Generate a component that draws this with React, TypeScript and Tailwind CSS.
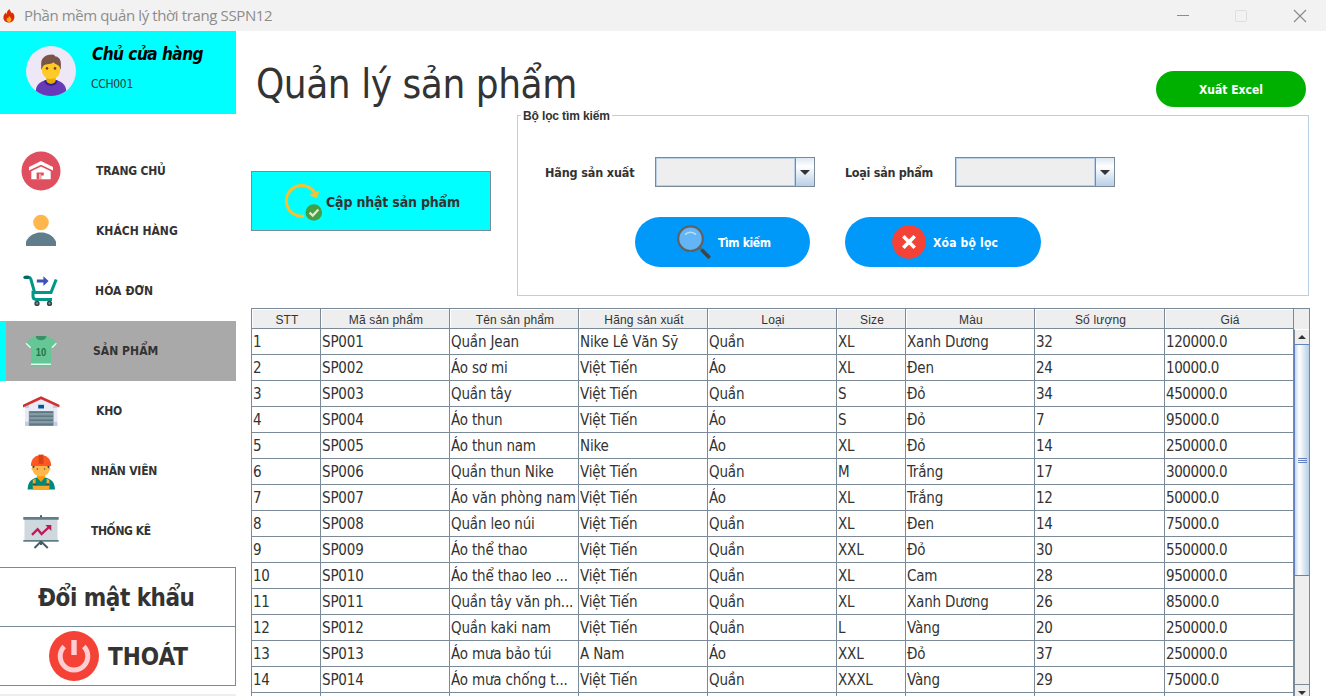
import React from "react";

type Product = [string, string, string, string, string, string, string, string, string];

const HEADERS = ["STT", "Mã sản phẩm", "Tên sản phẩm", "Hãng sản xuất", "Loại", "Size", "Màu", "Số lượng", "Giá"];

const PRODUCTS: Product[] = [
  ["1", "SP001", "Quần Jean", "Nike Lê Văn Sỹ", "Quần", "XL", "Xanh Dương", "32", "120000.0"],
  ["2", "SP002", "Áo sơ mi", "Việt Tiến", "Áo", "XL", "Đen", "24", "10000.0"],
  ["3", "SP003", "Quần tây", "Việt Tiến", "Quần", "S", "Đỏ", "34", "450000.0"],
  ["4", "SP004", "Áo thun", "Việt Tiến", "Áo", "S", "Đỏ", "7", "95000.0"],
  ["5", "SP005", "Áo thun nam", "Nike", "Áo", "XL", "Đỏ", "14", "250000.0"],
  ["6", "SP006", "Quần thun Nike", "Việt Tiến", "Quần", "M", "Trắng", "17", "300000.0"],
  ["7", "SP007", "Áo văn phòng nam", "Việt Tiến", "Áo", "XL", "Trắng", "12", "50000.0"],
  ["8", "SP008", "Quần leo núi", "Việt Tiến", "Quần", "XL", "Đen", "14", "75000.0"],
  ["9", "SP009", "Áo thể thao", "Việt Tiến", "Quần", "XXL", "Đỏ", "30", "550000.0"],
  ["10", "SP010", "Áo thể thao leo ...", "Việt Tiến", "Quần", "XL", "Cam", "28", "950000.0"],
  ["11", "SP011", "Quần tây văn ph...", "Việt Tiến", "Quần", "XL", "Xanh Dương", "26", "85000.0"],
  ["12", "SP012", "Quần kaki nam", "Việt Tiến", "Quần", "L", "Vàng", "20", "250000.0"],
  ["13", "SP013", "Áo mưa bảo túi", "A Nam", "Áo", "XXL", "Đỏ", "37", "250000.0"],
  ["14", "SP014", "Áo mưa chống t...", "Việt Tiến", "Quần", "XXXL", "Vàng", "29", "75000.0"],
  ["", "", "", "", "", "", "", "", ""],
];

const GRID = "grid grid-cols-[69px_129px_129px_129px_129px_69px_129px_130px_129px]";

function Flame() {
  return (
    <svg width="12" height="14" viewBox="0 0 12 14">
      <path d="M6.2 0C7 2 8.6 3 8.8 4.6L9.6 3.4C11 5 11.6 6.6 11.4 8.6C11 12 8.6 13.6 6 13.6C3 13.6 .4 11.8 .4 8.6C.4 6.4 1.6 5 2.6 3.6C2.8 4.4 3 4.8 3.6 5.2C3.6 3 4.8 1.6 6.2 0Z" fill="#dd2c00" />
      <path d="M6.4 7C7 8.4 8.4 8.8 8.4 10.6C8.4 12 7.4 13 6 13C4.6 13 3.6 12 3.6 10.8C3.6 10 3.9 9.4 4.4 8.8L5.2 9.4C5.2 8.4 5.8 7.6 6.4 7Z" fill="#ffab1a" />
    </svg>
  );
}

function Avatar() {
  return (
    <svg width="50" height="50" viewBox="0 0 50 50">
      <circle cx="25" cy="25" r="25" fill="#ede7f6" />
      <path d="M10 43C11 37 17 34.5 21 34H29C33 34.5 39 37 40 43V45A25 25 0 0 1 10 45Z" fill="#673ab7" />
      <path d="M18.5 34.6C19 41.500 31 41.500 31.5 34.6L29.5 34H20.5Z" fill="#311b92" />
      <path d="M20.3 29H29.7V34.6C29 39 21 39 20.3 34.6Z" fill="#e6ac00" />
      <path d="M16 16H34V24.5C34 30 29.5 33 25 33S16 30 16 24.5Z" fill="#ffca28" />
      <path d="M15.2 24V17C15.4 11.5 20 8.8 26 8.6C28 8.6 28.6 9.6 29 10.2C32.6 10.8 34.9 13 34.9 18V24L33.4 20.5C32.5 18.5 30 19 27.5 16.2C24 19.4 18 17 16.7 21Z" fill="#795548" />
      <circle cx="21" cy="22.4" r="1.3" fill="#784719" />
      <circle cx="29" cy="22.4" r="1.3" fill="#784719" />
    </svg>
  );
}

function HomeIcon() {
  return (
    <svg width="40" height="40" viewBox="0 0 40 40">
      <circle cx="20" cy="20" r="19.5" fill="#e04f5f" />
      <path d="M20 10L32 16V19.6L20 13.8L8 19.6V16Z" fill="#fff" />
      <path d="M10.3 20.2L20 15.4L29.7 20.2V28.3H10.3Z" fill="#fff" />
      <path d="M15.6 21.400H22.800V24.600H20.300V28.3H19.500V22.800H18.400V28.300H15.600Z" fill="#e04f5f" />
    </svg>
  );
}

function CustomerIcon() {
  return (
    <svg width="40" height="40" viewBox="0 1 40 40">
      <circle cx="20" cy="12.5" r="7.8" fill="#ffb74d" />
      <path d="M5 36V31.5C8.5 25 14 22.5 20 22.5S31.5 25 35 31.5V36Z" fill="#607d8b" />
    </svg>
  );
}

function CartIcon() {
  return (
    <svg width="40" height="40" viewBox="0 1.200 40 40" fill="none">
      <path d="M4.5 7.5H7.5C9 7.5 9.4 8 9.8 9.2L13.600 22.6H30L35.2 9.700" stroke="#009688" strokeWidth="3" />
      <path d="M4 7.5H7" stroke="#00695c" strokeWidth="3.2" strokeLinecap="round" />
      <path d="M12 21V26.5C12 29 13 29.6 15 29.6H31" stroke="#009688" strokeWidth="3" />
      <path d="M15.8 9.800H22.4V6.400L27.6 11.300L22.4 16.200V12.800H15.8Z" fill="#3f51b5" />
      <circle cx="16" cy="33.600" r="1.9" stroke="#37474f" strokeWidth="1.5" fill="#78909c" />
      <circle cx="28.5" cy="33.600" r="1.9" stroke="#37474f" strokeWidth="1.5" fill="#78909c" />
    </svg>
  );
}

function ShirtIcon() {
  return (
    <svg width="40" height="40" viewBox="0 0 40 40">
      <path d="M14.5 5H25.5L32 8L36.4 13.5L32 17.2L30 15.5V35.6H10V15.5L8 17.2L4 13.5L8.5 8Z" fill="#66c796" />
      <path d="M14.8 5H25.4C25 8 23 9.2 20 9.2S15 8 14.8 5Z" fill="#3f8f66" />
      <path d="M5 12.2L9.5 16.6M35.4 12.2L31 16.6M10 33.2H30" stroke="#e0f7e9" strokeWidth="1.5" />
      <text x="20" y="24.6" textAnchor="middle" fontSize="10.5" fontWeight="700" textLength="10.5" lengthAdjust="spacingAndGlyphs" fill="#24734b" className="font-['Liberation_Sans',sans-serif]">10</text>
    </svg>
  );
}

function WarehouseIcon() {
  return (
    <svg width="40" height="40" viewBox="0 1 40 40">
      <path d="M4 15L20 7.5L36.4 15V36H4Z" fill="#e8eaf6" />
      <path d="M4 31.8H8V36H4ZM32.4 31.8H36.4V36H32.4ZM4 16L8 14.4V18H4ZM32 14.4L36.4 16V18H32Z" fill="#c5cae9" />
      <path d="M2 14.8L20 6.2L38.4 14.8V17.6L20 9.2L2 17.6Z" fill="#d32f2f" />
      <path d="M17.2 14.8H23V18.5H17.2Z" fill="#01579b" />
      <path d="M7.8 21H32.6V36H7.8Z" fill="#78909c" />
      <path d="M8.5 22.2H32M8.5 26.2H32M8.5 30.2H32M8.5 34.2H32" stroke="#546e7a" strokeWidth="1" />
      <path d="M8.5 24H32M8.5 28H32M8.5 32H32" stroke="#90a4ae" strokeWidth="1" />
    </svg>
  );
}

function WorkerIcon() {
  return (
    <svg width="40" height="40" viewBox="0 1 40 40">
      <path d="M6.6 39.600C7 32 9.5 29.5 15.5 27.5H24.5C31 29.5 33.5 32 34 39.600Z" fill="#00897b" />
      <path d="M16 23H24V27.5L20 32L16 27.500Z" fill="#ff9800" />
      <path d="M11.2 14.5H28.8V18C30 18.5 29.6 20.5 28.2 20.5C27.5 24 24.5 26.4 20 26.4S12.5 24 11.8 20.5C10.4 20.5 10 18.5 11.2 18Z" fill="#ffb74d" />
      <path d="M11.4 15.4H13.6V17L12 18.4ZM28.6 15.4H26.4V17L28 18.4Z" fill="#424242" />
      <circle cx="16.4" cy="19" r=".8" fill="#784719" />
      <circle cx="23.6" cy="19" r=".8" fill="#784719" />
      <path d="M10 16V13.500C11 8.500 14.5 5 20 5C25.500 5 29 8.500 30 13.500V16Z" fill="#ff5722" />
      <path d="M17.6 4.600H22.4V13.8H17.6Z" fill="#d84315" />
      <path d="M11.8 30L14.600 28.800V35.800H25.600V28.800L28.400 30V39.600H11.800Z" fill="#f9a825" />
      <path d="M11.800 33.600H15.200V35.600H11.800ZM25.200 33.600H28.400V35.600H25.200Z" fill="#37474f" />
    </svg>
  );
}

function ChartIcon() {
  return (
    <svg width="40" height="40" viewBox="0 1 40 40" fill="none">
      <path d="M19 5.200H21V9H19Z" fill="#455a64" />
      <path d="M3.500 9H36.500V31H3.500Z" fill="#cfd8dc" />
      <path d="M2.300 7H37.700V9.800H2.300ZM2.300 30H37.700V31.800H2.300Z" fill="#607d8b" />
      <path d="M20 31.500L13.500 38M20 31.500L26.800 38M20 31V35" stroke="#455a64" strokeWidth="1.900" />
      <path d="M11 24.800L16.600 19.200L20.600 24L28 17" stroke="#c2185b" strokeWidth="2.400" />
      <path d="M24.400 15H30.300V20.900Z" fill="#c2185b" />
    </svg>
  );
}

function PowerIcon() {
  return (
    <svg width="50" height="50" viewBox="0 0 50 50" fill="none">
      <circle cx="25" cy="25" r="25" fill="#f44336" />
      <path d="M15.200 15.600A13.800 13.800 0 1 0 34.800 15.600" stroke="#ffcdd2" strokeWidth="5" />
      <path d="M25 9V24" stroke="#ffcdd2" strokeWidth="5.400" />
    </svg>
  );
}

function RefreshIcon() {
  return (
    <svg width="40" height="40" viewBox="0 0 40 40" fill="none">
      <path d="M21 35A15.300 15.300 0 1 1 32 12.400" stroke="#fbc02d" strokeWidth="3" />
      <path d="M27.300 14L35.800 10.400L33.500 16.900Z" fill="#fbc02d" stroke="#fbc02d" />
      <circle cx="30.800" cy="31.500" r="8.300" fill="#43a047" />
      <path d="M26.600 31.600L29.800 34.600L35.400 28.600" stroke="#dcedc8" strokeWidth="2.200" />
    </svg>
  );
}

function SearchIcon() {
  return (
    <svg width="40" height="40" viewBox="0 .8 40 40" fill="none">
      <path d="M25 25L37 37" stroke="#616161" strokeWidth="2.600" />
      <path d="M28.600 28.600L36.500 36.500" stroke="#37474f" strokeWidth="3.600" />
      <circle cx="17.500" cy="17.500" r="12.300" fill="#64b5f6" stroke="#616161" strokeWidth="2.200" />
      <path d="M12 13.400C15 10.200 20 10.200 23 13.400" stroke="#bbdefb" strokeWidth="1.600" />
    </svg>
  );
}

function ClearIcon() {
  return (
    <svg width="34" height="34" viewBox="0 0 34 34" fill="none">
      <circle cx="17" cy="17" r="16.800" fill="#f44336" />
      <path d="M11.300 11.300L22.700 22.700M22.700 11.300L11.300 22.700" stroke="#fff" strokeWidth="3.600" />
    </svg>
  );
}

const MENU = [
  { label: "TRANG CHỦ", icon: <HomeIcon />, text: "ml-[35px] tracking-[-0.2px]" },
  { label: "KHÁCH HÀNG", icon: <CustomerIcon />, text: "ml-[35px] tracking-[0px]" },
  { label: "HÓA ĐƠN", icon: <CartIcon />, text: "ml-[34px] tracking-[0.1px]" },
  { label: "SẢN PHẨM", icon: <ShirtIcon />, text: "ml-[32px] tracking-[0.05px]", active: true },
  { label: "KHO", icon: <WarehouseIcon />, text: "ml-[35px] tracking-[-0.2px]" },
  { label: "NHÂN VIÊN", icon: <WorkerIcon />, text: "ml-[30px] tracking-[-0.2px]" },
  { label: "THỐNG KÊ", icon: <ChartIcon />, text: "ml-[30px] tracking-[-0.4px]" },
];

function TitleBar() {
  return (
    <header className="flex h-[31px] shrink-0 items-center bg-[#f2f2f2] pl-[3px]">
      <Flame />
      <span className="ml-[9px] flex-1 whitespace-nowrap font-['Open_Sans','Noto_Sans',sans-serif] text-[15px] tracking-[-0.38px] text-[#8c8c8c]">
        Phần mềm quản lý thời trang SSPN12
      </span>
      <div className="flex w-[149px] items-center">
        <svg width="131" height="14" viewBox="0 0 131 14" fill="none">
          <path d="M0 6.500H12" stroke="#8c8c8c" />
          <rect x="58.500" y="1.500" width="11" height="11" rx="1" stroke="#dedede" />
          <path d="M117 1L129 13M129 1L117 13" stroke="#8c8c8c" strokeWidth="1.200" />
        </svg>
      </div>
    </header>
  );
}

function Sidebar() {
  return (
    <aside className="flex w-[236px] shrink-0 flex-col">
      <div className="flex h-[83px] shrink-0 bg-[#00ffff] pl-[26px] pt-[15px]">
        <Avatar />
        <div className="ml-[15px] whitespace-nowrap">
          <div className="-mt-[3px] ml-px h-[24px] text-[17px] font-bold italic leading-[22px] tracking-[-0.5px] text-black">Chủ cửa hàng</div>
          <div className="mt-[9px] text-[12px] leading-[16px] tracking-[-0.3px]">CCH001</div>
        </div>
      </div>
      <nav className="mt-[27px] shrink-0">
        {MENU.map((m) => (
          <div
            key={m.label}
            className={
              m.active
                ? "flex h-[60px] items-center border-l-[6px] border-[#00ffff] bg-[#a9a9a9] pl-[15px]"
                : "flex h-[60px] items-center pl-[21px]"
            }
          >
            {m.icon}
            <span className={`${m.text} whitespace-nowrap text-[12px] font-bold leading-[16px]`}>{m.label}</span>
          </div>
        ))}
      </nav>
      <button className="mt-[6px] flex h-[60px] shrink-0 items-center border-y border-r border-[#7a8a99] pl-[38px] pt-[2px] text-[24px] font-bold tracking-[-0.5px]">
        Đổi mật khẩu
      </button>
      <button className="flex h-[59px] shrink-0 items-center gap-[9px] border-b border-r border-[#7a8a99] pl-[49px] text-[24px] font-bold">
        <PowerIcon />
        <span className="pt-[2px]">THOÁT</span>
      </button>
      <div className="mt-[8px] h-[2px] shrink-0 bg-[#eee]" />
    </aside>
  );
}

function Combo() {
  return (
    <div className="flex h-[30px] w-[160px] border border-[#7a8a99]">
      <div className="flex-1 border border-[#b8cfe5] bg-[#eee]" />
      <div className="flex w-[19px] items-center justify-center border-l border-[#7a8a99] bg-linear-to-b from-[#dde8f3] via-white via-30% to-[#b8cfe5]">
        <svg width="10" height="5" viewBox="0 0 10 5" className="mt-px">
          <path d="M0 0H10L5 5Z" fill="#333" />
        </svg>
      </div>
    </div>
  );
}

function FilterPanel() {
  return (
    <section className="relative h-[181px] w-[792px] border border-[#b8cfe5] pl-[27px] pt-[41px]">
      <span className="absolute left-[3px] top-[-7px] whitespace-nowrap bg-white px-[2px] font-['Liberation_Sans',sans-serif] text-[12px] font-bold leading-[15px] tracking-[-0.13px]">
        Bộ lọc tìm kiếm
      </span>
      <div className="flex items-center text-[12.5px] font-bold">
        <span className="w-[110px] whitespace-nowrap pt-[2px] tracking-[-0.15px]">Hãng sản xuất</span>
        <Combo />
        <span className="ml-[30px] w-[110px] whitespace-nowrap pt-[2px] tracking-[-0.3px]">Loại sản phẩm</span>
        <Combo />
      </div>
      <div className="ml-[90px] mt-[30px] flex gap-[35px] text-[12px] font-bold text-white">
        <button className="flex h-[50px] w-[175px] items-center whitespace-nowrap rounded-full bg-[#0099fa] pl-[38px]">
          <SearchIcon />
          <span className="ml-[5px] pt-[2px] tracking-[-0.35px]">Tìm kiếm</span>
        </button>
        <button className="flex h-[50px] w-[196px] items-center whitespace-nowrap rounded-full bg-[#0099fa] pl-[47px]">
          <ClearIcon />
          <span className="ml-[7px] pt-[2px] tracking-[0.2px]">Xóa bộ lọc</span>
        </button>
      </div>
    </section>
  );
}

function ScrollBar() {
  return (
    <div className="flex w-[16px] shrink-0 flex-col border-r border-[#7a8a99]">
      <div className="h-[20px] shrink-0 bg-[#eee]" />
      <div className="flex h-[15px] shrink-0 items-center justify-center border-l border-t border-l-[#7a8a99] border-t-white bg-[#eee]">
        <svg width="8" height="4" viewBox="0 0 8 4">
          <path d="M4 0L8 4H0Z" fill="#333" />
        </svg>
      </div>
      <div className="flex h-[232px] shrink-0 flex-col items-center justify-center gap-px border-y border-l border-[#6382bf] bg-linear-to-r from-[#c5d8ec] via-white via-30% to-[#b8cfe5]">
        <div className="h-px w-[9px] bg-[#6382bf]" />
        <div className="h-px w-[9px] bg-[#6382bf]" />
        <div className="h-px w-[9px] bg-[#6382bf]" />
      </div>
      <div className="h-[109px] shrink-0 border-b border-l border-[#7a8a99] bg-[#eee]" />
      <div className="flex h-[15px] shrink-0 items-center justify-center border-l border-[#7a8a99] bg-[#eee]">
        <svg width="8" height="4" viewBox="0 0 8 4">
          <path d="M0 0H8L4 4Z" fill="#333" />
        </svg>
      </div>
    </div>
  );
}

function ProductTable() {
  return (
    <div className="ml-[15px] flex h-[400px] w-[1059px] shrink-0 border-l border-t border-[#7a8a99]">
      <div className="w-[1042px] shrink-0">
        <div className={`${GRID} h-[20px] grid-rows-[20px] font-['Liberation_Sans',sans-serif] text-[12px] leading-[22px]`}>
          {HEADERS.map((h) => (
            <div key={h} className="h-[20px] whitespace-nowrap border-b border-r border-[#7a8a99] bg-[#eee] pl-[2px] text-center tracking-[0.15px] shadow-[inset_1px_1px_0_white]">
              {h}
            </div>
          ))}
        </div>
        {PRODUCTS.map((row, i) => (
          <div key={i} className={`${GRID} h-[26px] grid-rows-[26px] text-[15px] leading-[27px]`}>
            {row.map((cell, j) => (
              <div
                key={j}
                className={`overflow-hidden whitespace-nowrap border-b border-r border-[#7a8a99] pl-px ${/^[\d.]+$/.test(cell) ? "tracking-[-0.4px]" : "tracking-[-0.17px]"}`}
              >
                {cell}
              </div>
            ))}
          </div>
        ))}
      </div>
      <ScrollBar />
    </div>
  );
}

export default function App() {
  return (
    <div className="flex h-[696px] w-[1326px] flex-col overflow-hidden bg-white font-['DejaVu_Sans_Condensed','DejaVu_Sans',sans-serif] text-[#333]">
      <TitleBar />
      <div className="flex min-h-0 flex-1">
        <Sidebar />
        <main className="flex min-w-0 flex-1 flex-col">
          <div className="flex h-[84px] shrink-0 items-start justify-between pl-[20px] pr-[20px]">
            <h1 className="mt-[26px] whitespace-nowrap text-[40px] leading-[54px] tracking-[-0.45px]">Quản lý sản phẩm</h1>
            <button className="mt-[40px] h-[36px] w-[150px] rounded-full bg-[#00b000] pt-[2px] text-[12px] font-bold text-white">Xuất Excel</button>
          </div>
          <div className="flex h-[193px] shrink-0 pl-[15px]">
            <button className="mr-[26px] mt-[56px] flex h-[60px] w-[240px] items-center whitespace-nowrap border border-[#7a8a99] bg-[#00ffff] pl-[31px] text-[14px] font-bold">
              <RefreshIcon />
              <span className="ml-[3px] pt-[2px] tracking-[-0.18px]">Cập nhật sản phẩm</span>
            </button>
            <FilterPanel />
          </div>
          <ProductTable />
        </main>
      </div>
    </div>
  );
}
